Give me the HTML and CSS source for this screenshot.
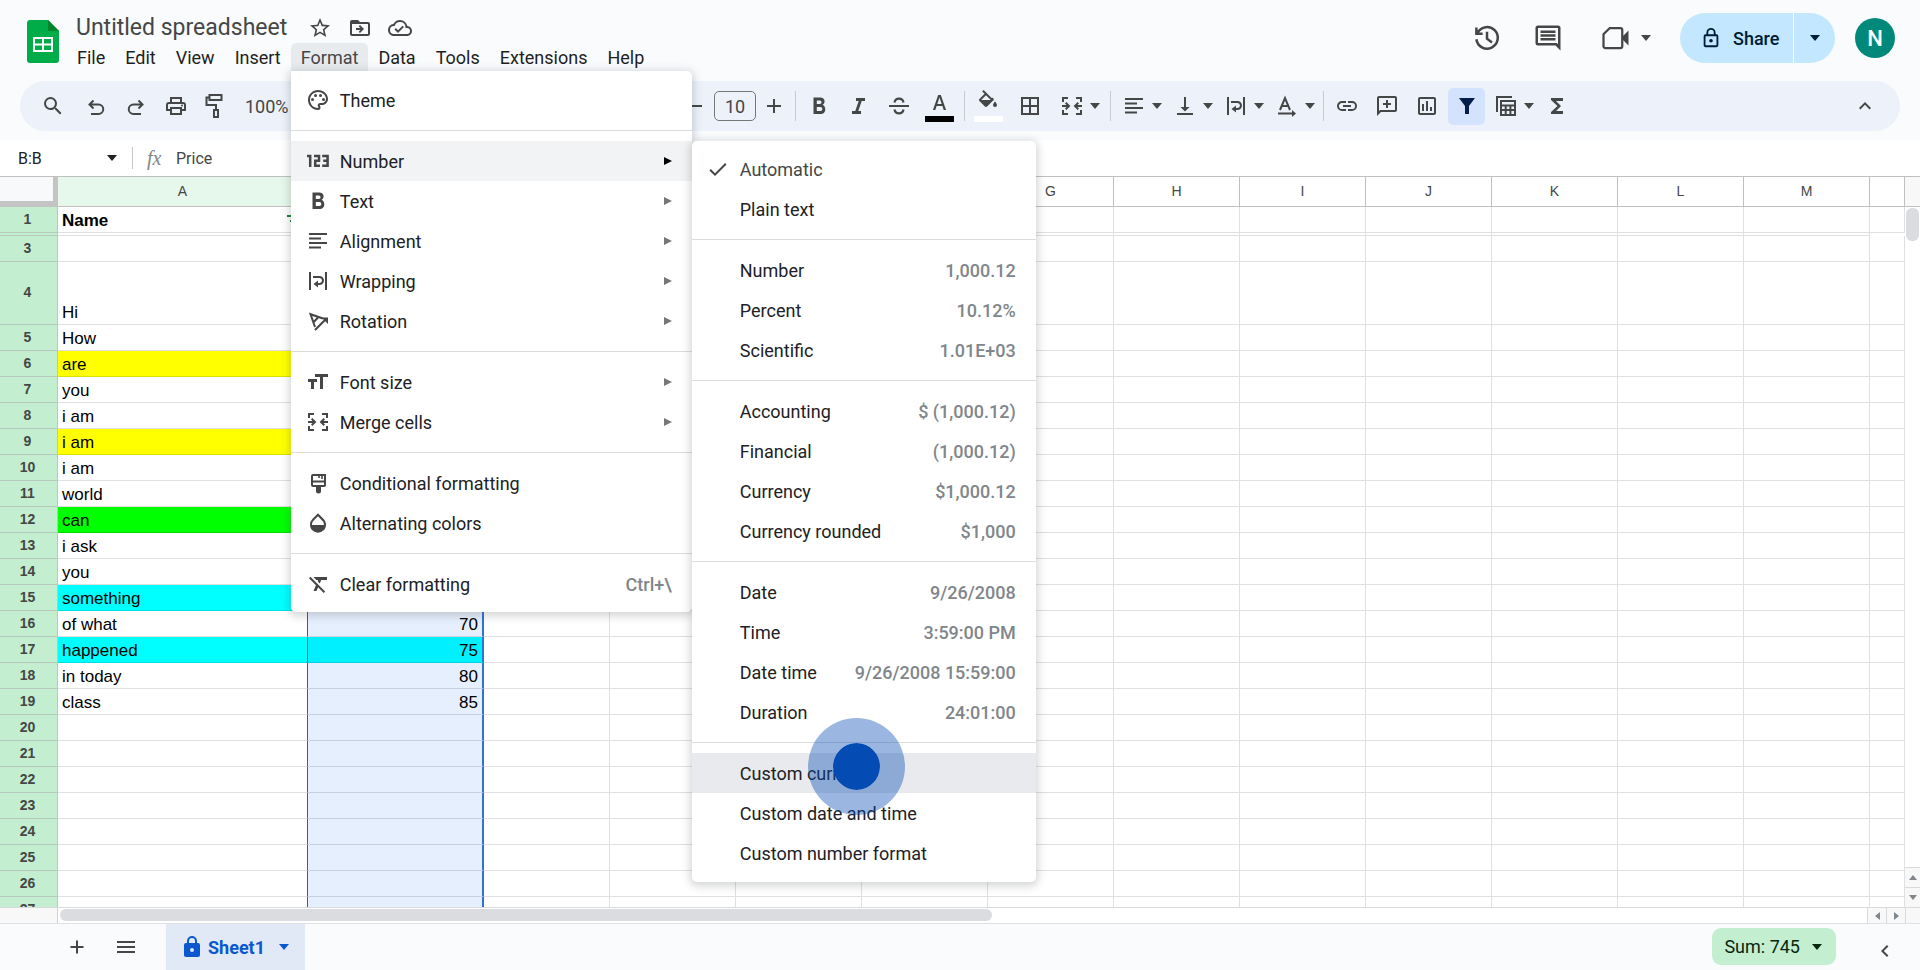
FILE: index.html
```html
<!DOCTYPE html>
<html lang="en">
<head>
<meta charset="utf-8">
<title>Untitled spreadsheet</title>
<link rel="stylesheet" href="styles.css">
</head>
<body>
<svg class="sprite" aria-hidden="true">
  <symbol id="i-down" viewBox="0 0 10 6"><path d="M0 0h10L5 6z"/></symbol>
  <symbol id="i-right" viewBox="0 0 8 8"><path d="M0 0v8l8-4z"/></symbol>
  <symbol id="i-align" viewBox="0 0 24 24"><path d="M3 3h18v2H3zM3 7.500h12v2H3zM3 12h18v2H3zM3 16.500h12v2H3z" transform="translate(0 1)"/></symbol>
  <symbol id="i-merge" viewBox="0 0 24 24"><path d="M2 3h6v2H4v3H2zM16 3h6v5h-2V5h-4zM2 16h2v3h4v2H2zM20 16h2v5h-6v-2h4zM2 11h4.500L5 9.400 6.400 8l4 4-4 4L5 14.600 6.500 13H2zM22 11h-4.500L19 9.400 17.600 8l-4 4 4 4 1.400-1.400L17.500 13H22z"/></symbol>
  <symbol id="i-wrap" viewBox="0 0 24 24"><path d="M3 3h2v18H3zM19 3h2v18h-2zM7 7h6.500a4.500 4.500 0 0 1 0 9H12v2.500L7.500 15l4.500-3.500V14h1.500a2.500 2.500 0 0 0 0-5H7z"/></symbol>
  <symbol id="i-bold" viewBox="0 0 24 24"><path d="M15.600 10.800A3.900 3.900 0 0 0 17.600 7.500C17.600 5 15.700 3.500 13.200 3.500H6.500v16.500h7.300c2.700 0 4.500-1.900 4.500-4.600 0-2-1-3.800-2.700-4.600zM9.800 6.400h3a1.700 1.700 0 0 1 0 3.500h-3zm3.500 10.700H9.800v-4.200h3.500a2.100 2.100 0 0 1 0 4.200z"/></symbol>
  <symbol id="i-lock" viewBox="0 0 24 24"><path d="M18 8h-1V6A5 5 0 0 0 7 6v2H6a2 2 0 0 0-2 2v10c0 1.100.9 2 2 2h12a2 2 0 0 0 2-2V10a2 2 0 0 0-2-2zM9 6a3 3 0 0 1 6 0v2H9zm3 11a2 2 0 1 1 0-4 2 2 0 0 1 0 4z"/></symbol>
</svg>

<header class="header">
  <svg class="logo" viewBox="0 0 32 43"><path fill="#00ac47" d="M3 0h18l11 11v29a3 3 0 0 1-3 3H3a3 3 0 0 1-3-3V3a3 3 0 0 1 3-3z"/><path fill="#00832d" d="M21 0l11 11H21z"/><path fill="#fff" d="M6 17h20v15H6zm2 2v4.500h7V19zm9 0v4.500h7V19zm-9 6.500V30h7v-4.500zm9 0V30h7v-4.500z" fill-rule="evenodd"/></svg>
  <div class="doc">
    <div class="title-row">
      <h1 class="title">Untitled spreadsheet</h1>
      <button class="plain" aria-label="Star"><svg class="icon" viewBox="0 0 24 24"><path d="M22 9.240l-7.190-.62L12 2 9.190 8.630 2 9.240l5.460 4.730L5.820 21 12 17.270 18.180 21l-1.630-7.030zM12 15.400l-3.760 2.270 1-4.280-3.320-2.880 4.380-.38L12 6.100l1.710 4.040 4.380.38-3.320 2.880 1 4.280z"/></svg></button>
      <button class="plain" aria-label="Move"><svg class="icon" viewBox="0 0 24 24"><path d="M20 6h-8l-2-2H4c-1.100 0-2 .9-2 2v12c0 1.100.9 2 2 2h16c1.100 0 2-.9 2-2V8c0-1.100-.9-2-2-2zm0 12H4V8h16zM12 17l4-4-4-4-1.300 1.300 1.700 1.700H8v2h4.400l-1.700 1.700z"/></svg></button>
      <button class="plain" aria-label="Saved"><svg class="icon" viewBox="0 0 24 24"><path d="M19.350 10.040A7.490 7.490 0 0 0 12 4C9.110 4 6.600 5.640 5.350 8.040A5.990 5.990 0 0 0 0 14c0 3.310 2.690 6 6 6h13c2.760 0 5-2.240 5-5 0-2.640-2.050-4.780-4.650-4.960zM19 18H6a4 4 0 0 1 0-8h.7a5.500 5.500 0 0 1 10.800 1.500v.5H19a3 3 0 0 1 0 6zm-9-3.800l-2.100-2.100-1.400 1.400L10 17l5.900-5.900-1.400-1.400z"/></svg></button>
    </div>
    <nav class="menubar">
      <button class="menu-btn">File</button>
      <button class="menu-btn">Edit</button>
      <button class="menu-btn">View</button>
      <button class="menu-btn">Insert</button>
      <div class="menu-open">
        <button class="menu-btn active">Format</button>
        <div class="menu format-menu" role="menu">
          <button class="item"><svg class="icon" viewBox="0 0 24 24"><path d="M12 22C6.490 22 2 17.510 2 12S6.490 2 12 2s10 4.040 10 9c0 3.310-2.690 6-6 6h-1.770c-.28 0-.5.22-.5.5 0 .12.050.23.130.33.410.47.640 1.060.640 1.670A2.500 2.500 0 0 1 12 22zm0-18c-4.410 0-8 3.590-8 8s3.590 8 8 8c.28 0 .5-.22.5-.5a.54.54 0 0 0-.14-.35c-.41-.46-.63-1.050-.63-1.650a2.500 2.500 0 0 1 2.500-2.500H16c2.210 0 4-1.790 4-4 0-3.860-3.590-7-8-7z"/><circle cx="6.500" cy="11.500" r="1.500"/><circle cx="9.500" cy="7.500" r="1.500"/><circle cx="14.500" cy="7.500" r="1.500"/><circle cx="17.500" cy="11.500" r="1.500"/></svg><span class="label">Theme</span></button>
          <hr>
          <div class="submenu-host">
            <button class="item hover"><svg class="icon" viewBox="0 0 24 24"><path fill="none" stroke="currentColor" stroke-width="2.500" d="M1 7h3.200v11M8 7h5v4.700H9.200v5.100H14M16.200 7h5.400v9.800h-5.400M17.200 11.800h4.400"/></svg><span class="label">Number</span><svg class="arrow" aria-hidden="true"><use href="#i-right"/></svg></button>
            <div class="menu number-menu" role="menu">
              <button class="item muted"><svg class="icon" viewBox="0 0 24 24"><path d="M9 16.200L4.800 12l-1.400 1.400L9 19 20.500 7.500 19.100 6.100z"/></svg><span class="label">Automatic</span></button>
              <button class="item"><span class="icon"></span><span class="label">Plain text</span></button>
              <hr>
              <button class="item"><span class="icon"></span><span class="label">Number</span><span class="hint">1,000.12</span></button>
              <button class="item"><span class="icon"></span><span class="label">Percent</span><span class="hint">10.12%</span></button>
              <button class="item"><span class="icon"></span><span class="label">Scientific</span><span class="hint">1.01E+03</span></button>
              <hr>
              <button class="item"><span class="icon"></span><span class="label">Accounting</span><span class="hint">$ (1,000.12)</span></button>
              <button class="item"><span class="icon"></span><span class="label">Financial</span><span class="hint">(1,000.12)</span></button>
              <button class="item"><span class="icon"></span><span class="label">Currency</span><span class="hint">$1,000.12</span></button>
              <button class="item"><span class="icon"></span><span class="label">Currency rounded</span><span class="hint">$1,000</span></button>
              <hr>
              <button class="item"><span class="icon"></span><span class="label">Date</span><span class="hint">9/26/2008</span></button>
              <button class="item"><span class="icon"></span><span class="label">Time</span><span class="hint">3:59:00 PM</span></button>
              <button class="item"><span class="icon"></span><span class="label">Date time</span><span class="hint">9/26/2008 15:59:00</span></button>
              <button class="item"><span class="icon"></span><span class="label">Duration</span><span class="hint">24:01:00</span></button>
              <hr>
              <div class="pointer-host">
                <button class="item pressed"><span class="icon"></span><span class="label">Custom currency</span></button>
                <span class="pointer"></span>
              </div>
              <button class="item"><span class="icon"></span><span class="label">Custom date and time</span></button>
              <button class="item"><span class="icon"></span><span class="label">Custom number format</span></button>
            </div>
          </div>
          <button class="item"><svg class="icon"><use href="#i-bold"/></svg><span class="label">Text</span><svg class="arrow"><use href="#i-right"/></svg></button>
          <button class="item"><svg class="icon"><use href="#i-align"/></svg><span class="label">Alignment</span><svg class="arrow"><use href="#i-right"/></svg></button>
          <button class="item"><svg class="icon"><use href="#i-wrap"/></svg><span class="label">Wrapping</span><svg class="arrow"><use href="#i-right"/></svg></button>
          <button class="item"><svg class="icon" viewBox="0 0 24 24"><path fill="none" stroke="currentColor" stroke-width="2" d="M9 18L4.500 5.200 17 9.500M7.500 13.200L12.500 8M9 21L20 10"/><path d="M15.500 8.500H22V15z"/></svg><span class="label">Rotation</span><svg class="arrow"><use href="#i-right"/></svg></button>
          <hr>
          <button class="item"><svg class="icon" viewBox="0 0 24 24"><path d="M9 4v3h5v12h3V7h5V4zM2 12h3v7h3v-7h3V9H2z"/></svg><span class="label">Font size</span><svg class="arrow"><use href="#i-right"/></svg></button>
          <button class="item"><svg class="icon"><use href="#i-merge"/></svg><span class="label">Merge cells</span><svg class="arrow"><use href="#i-right"/></svg></button>
          <hr>
          <button class="item"><svg class="icon" viewBox="0 0 24 24"><path d="M7 3h13v11a2 2 0 0 1-2 2h-3v4a2.500 2.500 0 0 1-5 0v-4H7a2 2 0 0 1-2-2V5a2 2 0 0 1 2-2zm0 2v4.500h11V5h-1.200v3h-1.600V5h-1.400v2h-1.600V5zm0 6.500V14h11v-2.500z" fill-rule="evenodd"/></svg><span class="label">Conditional formatting</span></button>
          <button class="item"><svg class="icon" viewBox="0 0 24 24"><path d="M17.660 8L12 2.350 6.340 8A8.020 8.020 0 0 0 4 13.640c0 2 .78 4.110 2.340 5.670a7.990 7.990 0 0 0 11.320 0c1.560-1.560 2.340-3.670 2.340-5.670S19.220 9.560 17.660 8zM6 14c.01-2 .62-3.270 1.760-4.400L12 5.270l4.240 4.380C17.380 10.770 17.990 12 18 14z"/></svg><span class="label">Alternating colors</span></button>
          <hr>
          <button class="item"><svg class="icon" viewBox="0 0 24 24"><path d="M20 8V5H6.390l3 3h1.830l-.55 1.280 2.090 2.100L14.210 8zM3.410 4.860L2 6.270l6.970 6.970L6.500 19h3l1.570-3.660L16.730 21l1.410-1.410z" transform="translate(1 0)"/></svg><span class="label">Clear formatting</span><span class="hint">Ctrl+\</span></button>
        </div>
      </div>
      <button class="menu-btn">Data</button>
      <button class="menu-btn">Tools</button>
      <button class="menu-btn">Extensions</button>
      <button class="menu-btn">Help</button>
    </nav>
  </div>
  <div class="actions">
    <button class="plain" aria-label="Version history"><svg class="icon-lg" viewBox="0 0 24 24"><path fill="none" stroke="currentColor" stroke-width="2" d="M4.500 7.700A8.600 8.600 0 1 1 3.500 13M3.500 3.500v5h5M12 7v5.500l4 3"/></svg></button>
    <button class="plain comments" aria-label="Comments"><svg class="icon-lg" viewBox="0 0 24 24"><path d="M22 22l-4-4H4a2 2 0 0 1-2-2V4a2 2 0 0 1 2-2h16a2 2 0 0 1 2 2zM20 4H4v12h15l1 1zM6 6h12v2H6zM6 9h12v2H6zM6 12h12v2H6z"/></svg></button>
    <button class="plain meet" aria-label="Meet"><svg class="icon-lg" viewBox="0 0 24 24"><path fill="none" stroke="currentColor" stroke-width="1.800" d="M7 4h8.500A1.500 1.500 0 0 1 17 5.500v13a1.500 1.500 0 0 1-1.500 1.500h-12A1.500 1.500 0 0 1 2 18.500V9z"/><path d="M17 11l5-5v12l-5-5z"/></svg><svg class="caret"><use href="#i-down"/></svg></button>
    <div class="share">
      <button class="share-main"><svg class="icon" viewBox="0 0 24 24"><path d="M18 8h-1V6A5 5 0 0 0 7 6v2H6a2 2 0 0 0-2 2v10c0 1.100.9 2 2 2h12a2 2 0 0 0 2-2V10a2 2 0 0 0-2-2zM9 6a3 3 0 0 1 6 0v2H9zm9 14H6V10h12zm-6-3a2 2 0 1 0 0-4 2 2 0 0 0 0 4z"/></svg>Share</button>
      <button class="share-more" aria-label="Share options"><svg class="caret"><use href="#i-down"/></svg></button>
    </div>
    <button class="avatar">N</button>
  </div>
</header>

<div class="toolbar" role="toolbar">
  <div class="tools-start">
    <button class="tool search" aria-label="Search"><svg class="icon" viewBox="0 0 24 24"><path d="M15.500 14h-.79l-.28-.27A6.470 6.470 0 0 0 16 9.500 6.500 6.500 0 1 0 9.500 16c1.610 0 3.090-.59 4.230-1.570l.27.28v.79l5 4.990L20.490 19zm-6 0a4.500 4.500 0 1 1 0-9 4.500 4.500 0 0 1 0 9z"/></svg></button>
    <button class="tool" aria-label="Undo"><svg class="icon" viewBox="0 0 24 24"><path fill="none" stroke="currentColor" stroke-width="2" d="M7 20h7.500a4.700 4.700 0 0 0 0-9.500H6M9.500 6.500l-4 4 4 4"/></svg></button>
    <button class="tool" aria-label="Redo"><svg class="icon" viewBox="0 0 24 24"><path fill="none" stroke="currentColor" stroke-width="2" d="M17 20H9.500a4.700 4.700 0 0 1 0-9.500H18M14.500 6.500l4 4-4 4"/></svg></button>
    <button class="tool" aria-label="Print"><svg class="icon" viewBox="0 0 24 24"><path d="M19 8h-1V3H6v5H5a3 3 0 0 0-3 3v6h4v4h12v-4h4v-6a3 3 0 0 0-3-3zM8 5h8v3H8zm8 14H8v-4h8zm2-4v-2H6v2H4v-4c0-.55.45-1 1-1h14c.55 0 1 .45 1 1v4z"/><circle cx="18" cy="11.500" r="1"/></svg></button>
    <button class="tool" aria-label="Paint format"><svg class="icon" viewBox="0 0 24 24"><path fill="none" stroke="currentColor" stroke-width="2" d="M5.500 1h12v5h-12zM5.500 3.500H2.500V11H12v5M10 16h4v7h-4z"/></svg></button>
    <button class="zoom">100%</button>
  </div>
  <div class="tool-group">
    <button class="tool small" aria-label="Decrease font size"><svg class="icon" viewBox="0 0 24 24"><path d="M5 11h14v2H5z"/></svg></button>
    <input class="font-size" aria-label="Font size" value="10">
    <button class="tool small" aria-label="Increase font size"><svg class="icon" viewBox="0 0 24 24"><path d="M5 11h6V5h2v6h6v2h-6v6h-2v-6H5z"/></svg></button>
  </div>
  <div class="tool-group">
    <button class="tool" aria-label="Bold"><svg class="icon"><use href="#i-bold"/></svg></button>
    <button class="tool" aria-label="Italic"><svg class="icon" viewBox="0 0 24 24"><path d="M9 4v3h2.700L8.300 17H5v3h9v-3h-2.700l3.400-10H18V4z"/></svg></button>
    <button class="tool" aria-label="Strikethrough"><svg class="icon" viewBox="0 0 24 24"><path d="M2 11h20v2H2z"/><path fill="none" stroke="currentColor" stroke-width="2.200" d="M16.500 8.500C16 5.500 14 4.700 12 4.700S8 5.500 7.500 8.500M7.500 15.500c.5 3 2.500 3.800 4.500 3.800s4-.8 4.500-3.800"/></svg></button>
    <button class="tool" aria-label="Text color"><svg class="icon-bar" viewBox="0 0 29 28"><path d="M13.200 1h2.600l5.300 15h-2.400l-1.300-4h-5.800l-1.300 4H7.900zM12.300 10h4.400l-2.200-6.500z"/><path fill="#000" d="M0 22h29v6H0z"/></svg></button>
  </div>
  <div class="tool-group spaced">
    <button class="tool" aria-label="Fill color"><svg class="icon-bar fill" viewBox="0 0 29 34"><path d="M16.600 8.900L8.600 1 7.200 2.400l2.400 2.400-5.200 5.100a1.500 1.500 0 0 0 0 2.200l5.500 5.500c.6.600 1.600.6 2.200 0l5.500-5.500a1.500 1.500 0 0 0-1.100-3.200zM6.200 11L11 6.200l4.800 4.800zM20 12.500s-2 2.200-2 3.500a2 2 0 0 0 4 0c0-1.300-2-3.500-2-3.500z" transform="translate(1 1)"/><path fill="#fff" d="M0 28h29v6H0z"/></svg></button>
    <button class="tool" aria-label="Borders"><svg class="icon" viewBox="0 0 24 24"><path d="M3 3v18h18V3zm8 16H5v-6h6zm0-8H5V5h6zm8 8h-6v-6h6zm0-8h-6V5h6z"/></svg></button>
    <button class="tool-menu" aria-label="Merge"><svg class="icon"><use href="#i-merge"/></svg><svg class="caret"><use href="#i-down"/></svg></button>
  </div>
  <div class="tool-group">
    <button class="tool-menu" aria-label="Align"><svg class="icon"><use href="#i-align"/></svg><svg class="caret"><use href="#i-down"/></svg></button>
    <button class="tool-menu" aria-label="Vertical align"><svg class="icon" viewBox="0 0 24 24"><path d="M11 3h2v10h3.500L12 17.500 7.500 13H11zM4 19h16v2H4z"/></svg><svg class="caret"><use href="#i-down"/></svg></button>
    <button class="tool-menu" aria-label="Wrap"><svg class="icon"><use href="#i-wrap"/></svg><svg class="caret"><use href="#i-down"/></svg></button>
    <button class="tool-menu" aria-label="Rotate"><svg class="icon" viewBox="0 0 24 24"><path fill="none" stroke="currentColor" stroke-width="2" d="M5 16L10 4l5 12M7 12h6M3 19.500h15"/><path d="M17 16l4 3.500-4 3.500z"/></svg><svg class="caret"><use href="#i-down"/></svg></button>
  </div>
  <div class="tool-group">
    <button class="tool" aria-label="Link"><svg class="icon" viewBox="0 0 24 24"><path d="M3.900 12c0-1.710 1.390-3.100 3.100-3.100h4V7H7a5 5 0 0 0 0 10h4v-1.900H7A3.100 3.100 0 0 1 3.900 12zM8 13h8v-2H8zm9-6h-4v1.900h4a3.100 3.100 0 0 1 0 6.200h-4V17h4a5 5 0 0 0 0-10z"/></svg></button>
    <button class="tool" aria-label="Add comment"><svg class="icon" viewBox="0 0 24 24"><path d="M2 22V4c0-1.100.9-2 2-2h16a2 2 0 0 1 2 2v12a2 2 0 0 1-2 2H6zM4 4v13l1-1h15V4zM11 6h2v3h3v2h-3v3h-2v-3H8V9h3z"/></svg></button>
    <button class="tool" aria-label="Chart"><svg class="icon" viewBox="0 0 24 24"><path d="M19 3H5a2 2 0 0 0-2 2v14c0 1.100.9 2 2 2h14a2 2 0 0 0 2-2V5a2 2 0 0 0-2-2zm0 16H5V5h14zM7 10h2v7H7zM11 7h2v10h-2zM15 13h2v4h-2z"/></svg></button>
    <button class="tool on" aria-label="Filter"><svg class="icon" viewBox="0 0 24 24"><path d="M4 4h16l-6 8v8h-4v-8z"/></svg></button>
    <button class="tool-menu" aria-label="Table views"><svg class="icon" viewBox="0 0 24 24"><path fill="none" stroke="currentColor" stroke-width="2" d="M3 18V3h15M7 7h14v14H7zM7 11.500h14M7 16h14M11.700 11.500V21M16.400 11.500V21"/></svg><svg class="caret"><use href="#i-down"/></svg></button>
    <button class="tool" aria-label="Functions"><svg class="icon" viewBox="0 0 24 24"><path d="M18 4H6v2l6.500 6L6 18v2h12v-3h-7l5-5-5-5h7z"/></svg></button>
  </div>
  <button class="tool collapse" aria-label="Hide menus"><svg class="icon" viewBox="0 0 24 24"><path d="M12 8l-6 6 1.400 1.400 4.600-4.600 4.600 4.600L18 14z"/></svg></button>
</div>

<div class="formula">
  <button class="name-box"><span>B:B</span><svg class="caret"><use href="#i-down"/></svg></button>
  <span class="fx">fx</span>
  <input class="formula-input" aria-label="Formula" value="Price">
</div>

<main class="sheet">
  <div class="grid">
    <table class="cells">
      <colgroup><col class="c-head"><col class="c-a"><col class="c-b"><col class="c-n"><col class="c-n"><col class="c-n"><col class="c-n"><col class="c-n"><col class="c-n"><col class="c-n"><col class="c-n"><col class="c-n"><col class="c-n"><col class="c-n"><col></colgroup>
      <thead><tr><td class="corner"><th class="sel">A<th class="sel">B<th>C<th>D<th>E<th>F<th>G<th>H<th>I<th>J<th>K<th>L<th>M<th></tr></thead>
      <tbody>
        <tr><th>1<td><div class="filter-cell"><b>Name</b><svg class="filter" viewBox="0 0 16 12"><path d="M0 0h16v2H0zM3 5h10v2H3zM6 10h4v2H6z"/></svg></div><td><td><td><td><td><td><td><td><td><td><td><td><td></tr>
        <tr class="frozen"><th><td><td><td><td><td><td><td><td><td><td><td><td><td></tr>
        <tr><th>3<td><td><td><td><td><td><td><td><td><td><td><td><td><td></tr>
        <tr class="tall"><th>4<td>Hi<td><td><td><td><td><td><td><td><td><td><td><td><td></tr>
        <tr><th>5<td>How<td><td><td><td><td><td><td><td><td><td><td><td><td></tr>
        <tr><th>6<td class="yellow">are<td><td><td><td><td><td><td><td><td><td><td><td><td></tr>
        <tr><th>7<td>you<td><td><td><td><td><td><td><td><td><td><td><td><td></tr>
        <tr><th>8<td>i am<td><td><td><td><td><td><td><td><td><td><td><td><td></tr>
        <tr><th>9<td class="yellow">i am<td><td><td><td><td><td><td><td><td><td><td><td><td></tr>
        <tr><th>10<td>i am<td><td><td><td><td><td><td><td><td><td><td><td><td></tr>
        <tr><th>11<td>world<td><td><td><td><td><td><td><td><td><td><td><td><td></tr>
        <tr><th>12<td class="green">can<td><td><td><td><td><td><td><td><td><td><td><td><td></tr>
        <tr><th>13<td>i ask<td><td><td><td><td><td><td><td><td><td><td><td><td></tr>
        <tr><th>14<td>you<td><td><td><td><td><td><td><td><td><td><td><td><td></tr>
        <tr><th>15<td class="cyan">something<td><td><td><td><td><td><td><td><td><td><td><td><td></tr>
        <tr><th>16<td>of what<td>70<td><td><td><td><td><td><td><td><td><td><td><td></tr>
        <tr><th>17<td class="cyan">happened<td class="cyan">75<td><td><td><td><td><td><td><td><td><td><td><td></tr>
        <tr><th>18<td>in today<td>80<td><td><td><td><td><td><td><td><td><td><td><td></tr>
        <tr><th>19<td>class<td>85<td><td><td><td><td><td><td><td><td><td><td><td></tr>
        <tr><th>20<td><td><td><td><td><td><td><td><td><td><td><td><td><td></tr>
        <tr><th>21<td><td><td><td><td><td><td><td><td><td><td><td><td><td></tr>
        <tr><th>22<td><td><td><td><td><td><td><td><td><td><td><td><td><td></tr>
        <tr><th>23<td><td><td><td><td><td><td><td><td><td><td><td><td><td></tr>
        <tr><th>24<td><td><td><td><td><td><td><td><td><td><td><td><td><td></tr>
        <tr><th>25<td><td><td><td><td><td><td><td><td><td><td><td><td><td></tr>
        <tr><th>26<td><td><td><td><td><td><td><td><td><td><td><td><td><td></tr>
        <tr><th>27<td><td><td><td><td><td><td><td><td><td><td><td><td><td></tr>
      </tbody>
    </table>
  </div>
  <div class="vscroll">
    <div class="vtrack"><div class="vthumb"></div></div>
    <button class="step" aria-label="Scroll up"><svg viewBox="0 0 8 5"><path d="M0 5h8L4 0z"/></svg></button>
    <button class="step" aria-label="Scroll down"><svg viewBox="0 0 8 5"><path d="M0 0h8L4 5z"/></svg></button>
  </div>
</main>
<div class="hscroll">
  <div class="hpad"></div>
  <div class="htrack"><div class="hthumb"></div></div>
  <button class="hstep" aria-label="Scroll left"><svg viewBox="0 0 5 8"><path d="M5 0v8L0 4z"/></svg></button>
  <button class="hstep" aria-label="Scroll right"><svg viewBox="0 0 5 8"><path d="M0 0v8l5-4z"/></svg></button>
  <div class="hcorner"></div>
</div>

<footer class="footer">
  <button class="foot-btn" aria-label="Add sheet"><svg class="icon" viewBox="0 0 24 24"><path d="M5.500 11H11V5.500h2V11h5.500v2H13v5.500h-2V13H5.500z"/></svg></button>
  <button class="foot-btn" aria-label="All sheets"><svg class="icon" viewBox="0 0 24 24"><path d="M3 6h18v2H3zM3 11h18v2H3zM3 16h18v2H3z"/></svg></button>
  <button class="tab"><svg class="icon"><use href="#i-lock"/></svg><span>Sheet1</span><svg class="caret"><use href="#i-down"/></svg></button>
  <button class="sum"><span>Sum: 745</span><svg class="caret"><use href="#i-down"/></svg></button>
  <button class="side" aria-label="Show side panel"><svg class="icon" viewBox="0 0 24 24"><path d="M15.400 7.400L14 6l-6 6 6 6 1.400-1.400-4.600-4.600z"/></svg></button>
</footer>
</body>
</html>
```
FILE: styles.css
```css
* { box-sizing: border-box; }
html, body { height: 100%; }
body {
  margin: 0;
  display: flex;
  flex-direction: column;
  overflow: hidden;
  background: #f9fbfd;
  color: #202124;
  font-family: Roboto, "Liberation Sans", sans-serif;
  font-size: 18px;
}
button, input { font: inherit; color: inherit; border: 0; padding: 0; margin: 0; background: none; }
button { cursor: pointer; white-space: nowrap; }
svg { display: block; fill: currentColor; flex: none; }
.sprite { position: absolute; width: 0; height: 0; }
.icon { width: 24px; height: 24px; flex: none; }
.icon-lg { width: 30px; height: 30px; }
.caret { width: 10px; height: 6px; }
.plain { display: flex; align-items: center; color: #444746; }

/* Header */
.header { display: flex; height: 81px; flex: none; padding: 0 20px 0 27px; }
.logo { width: 32px; height: 43px; margin-top: 20px; }
.doc { margin-left: 8px; padding-top: 12px; }
.title-row { display: flex; align-items: center; height: 31px; padding-left: 9px; gap: 16px; }
.title { margin: 0 5px 0 0; font-size: 23px; font-weight: 400; color: #444746; }
.menubar { display: flex; }
.menu-btn { height: 28px; padding: 0 10px; border-radius: 5px 5px 0 0; color: #1f1f1f; }
.menu-btn.active { background: #e8ebee; color: #444746; }
.menu-open, .submenu-host, .pointer-host { position: relative; }
.actions { display: flex; align-items: center; height: 50px; margin: 13px 0 0 auto; }
.actions > .plain { margin-right: 31px; }
.actions > .comments { margin-right: 38px; }
.actions > .meet { gap: 10px; margin-right: 29px; }
.share { display: flex; height: 50px; border-radius: 25px; overflow: hidden; background: #c2e7ff; color: #001d35; font-weight: 500; }
.share-main { display: flex; align-items: center; gap: 11px; width: 114px; padding-left: 20px; border-right: 1px solid #fff; }
.share-main .icon { width: 22px; height: 22px; }
.share-more { display: flex; align-items: center; justify-content: center; width: 41px; }
.avatar { width: 40px; height: 40px; margin: 0 5px 0 20px; border-radius: 50%; background: #00897b; color: #fff; font-size: 22px; font-weight: 500; }

/* Menus */
.menu { position: absolute; z-index: 5; padding: 9px 0 8px; border-radius: 5px; background: #fff; box-shadow: 0 2px 8px 2px rgba(60, 64, 67, .22); }
.format-menu { left: 0; top: 100%; width: 401px; border-top-left-radius: 0; }
.number-menu { left: 100%; top: 0; width: 344px; padding: 8px 0 9px; }
.menu hr { height: 1px; margin: 10px 0; border: 0; background: #dadce0; }
.item { display: flex; align-items: center; width: 100%; height: 40px; padding: 0 20px 0 15px; gap: 10px; text-align: left; color: #202124; }
.item .icon { color: #444746; }
.item .label { flex: 1; }
.item .arrow { width: 8px; height: 8px; color: #777; }
.item.hover { background: #f1f3f4; }
.item.hover .arrow { color: #000; }
.item.muted { color: #444746; }
.item.pressed { background: #e8eaed; }
.hint { color: #80868b; font-weight: 500; }
.number-menu .item { gap: 10px; padding-left: 14px; }
.pointer { position: absolute; left: 116px; top: -35px; width: 97px; height: 97px; border: 25px solid rgba(4, 76, 180, .4); border-radius: 50%; background: #044cb4; background-clip: padding-box; }

/* Toolbar */
.toolbar { display: flex; align-items: center; flex: none; height: 50px; margin: 0 20px; padding: 0 15px 0 13px; border-radius: 25px; background: #edf2fa; color: #444746; }
.tools-start { display: flex; align-items: center; width: 647px; flex: none; }
.tool, .tool-menu { display: flex; align-items: center; justify-content: center; width: 40px; height: 37px; }
.tool.small { width: 30px; }
.search { margin-right: 3px; }
.zoom { padding: 0 9px; }
.tool-menu { width: 51px; gap: 6px; padding-left: 5px; }
.tool-group { display: flex; align-items: center; padding: 0 5px 0 4px; background: linear-gradient(#c7cbd1, #c7cbd1) left center / 1px 30px no-repeat; }
.tool-group.spaced { gap: 2px; padding-right: 7px; }
.tools-start + .tool-group { background: none; padding: 0 6px 0 0; }
.font-size { width: 42px; height: 30px; margin: 0 3px 0 4px; border: 1px solid #747775; border-radius: 5px; text-align: center; }
.icon-bar { width: 29px; height: 28px; margin-top: 4px; }
.icon-bar.fill { height: 34px; margin-top: -2px; }
.tool.on { width: 37px; margin: 0 1px; border-radius: 5px; background: #d3e3fd; color: #041e49; }
.collapse { margin-left: auto; }

/* Formula bar */
.formula { display: flex; align-items: center; flex: none; height: 37px; margin-top: 9px; background: #fff; border-bottom: 1px solid #c0c0c0; font-size: 16px; }
.name-box { display: flex; align-items: center; justify-content: space-between; width: 133px; height: 22px; padding: 0 15px 0 18px; border-right: 1px solid #c7c7c7; color: #202124; }
.fx { width: 43px; padding-left: 14px; font: italic 20px "Liberation Serif", serif; color: #80868b; }
.formula-input { flex: 1; min-width: 0; height: 30px; color: #444746; }

/* Cells */
.sheet { display: flex; flex: 1; min-height: 0; overflow: hidden; background: #fff; border-bottom: 1px solid #d9dadc; }
.grid { flex: 1; min-width: 0; overflow: hidden; }
.cells { width: 100%; table-layout: fixed; border-collapse: separate; border-spacing: 0; font-family: "Liberation Sans", Arial, sans-serif; }
.c-head { width: 58px; }
.c-a { width: 250px; }
.c-b { width: 176px; }
.c-n { width: 126px; }
.cells th, .cells td { height: 26px; padding: 0 4px; border-right: 1px solid #e0e0e0; border-bottom: 1px solid #e0e0e0; overflow: hidden; white-space: nowrap; }
.cells thead th { height: 30px; padding-bottom: 1px; border-color: #c0c0c0; font-size: 14px; font-weight: 400; color: #444746; }
.cells thead th.sel { background: #e6f8ec; }
.cells .corner { border-right: 5px solid #c4c4c4; border-bottom: 6px solid #c4c4c4; background: #f8f9fb; }
.cells tbody th { padding: 0 2px 2px 0; border-color: #b7c9bc; background: #c4eed0; font-size: 14px; line-height: 16px; color: #444746; }
.cells tbody td { vertical-align: bottom; font-size: 17px; line-height: 20px; padding-bottom: 1px; color: #000; }
.cells tbody td:nth-child(2) { border-right-color: #188038; }
.cells tbody td:nth-child(3) { border-right: 2px solid #3271d6; border-bottom-color: #c9d0de; background: #e6effd; text-align: right; }
.cells .frozen th, .cells .frozen td { height: 3px; padding: 0; line-height: 0; }
.cells .tall td { height: 63px; }
.cells tbody td.yellow { background: #ff0; border-bottom-color: #dede00; }
.cells tbody td.green { background: #0f0; border-bottom-color: #00de00; }
.cells tbody td.cyan { background: #0ff; border-bottom-color: #00dede; }
.cells tbody td.cyan:nth-child(3) { background: #00f0ff; border-bottom-color: #00d5e0; }
.filter-cell { display: flex; align-items: center; justify-content: space-between; }
.filter { width: 16px; height: 12px; color: #188038; }

/* Scrollbars */
.vscroll { display: flex; flex-direction: column; width: 15px; background: #fff; }
.vtrack { flex: 1; padding: 31px 1px 0; background: linear-gradient(#f8f8f8 29px, #c0c0c0 29px, #c0c0c0 30px, #fff 30px); }
.vthumb { height: 33px; border-radius: 6px; background: #dadce0; }
.step { display: flex; align-items: center; justify-content: center; height: 20px; border-top: 1px solid #d9dadc; background: #f8f8f8; color: #80868b; }
.step svg { width: 8px; height: 5px; }
.hscroll { display: flex; flex: none; height: 15px; background: #fff; }
.hpad { width: 58px; background: #f8f8f8; border-right: 1px solid #d0d0d0; }
.htrack { flex: 1; padding: 1px 2px; }
.hthumb { width: calc(52% - 7px); height: 12px; border-radius: 6px; background: #dadce0; }
.hstep { display: flex; align-items: center; justify-content: center; width: 19px; border-left: 1px solid #d9dadc; background: #f8f8f8; color: #80868b; }
.hstep svg { width: 5px; height: 8px; }
.hcorner { width: 15px; border-left: 1px solid #d9dadc; background: #f8f8f8; }

/* Footer */
.footer { display: flex; flex: none; height: 47px; padding: 0 23px 0 52px; border-top: 1px solid #dfe1e5; background: #f9fbfd; color: #444746; }
.foot-btn { display: flex; align-items: center; justify-content: center; width: 49px; }
.tab { display: flex; align-items: center; width: 139px; margin-left: 16px; padding-left: 14px; background: #e1e9f7; color: #0b57d0; font-weight: 700; }
.tab span { margin: 0 14px 0 4px; }
.sum { display: flex; align-items: center; gap: 12px; height: 37px; margin: 4px 0 0 auto; padding: 0 14px 0 12px; border-radius: 9px; background: #c4eed0; color: #072711; }
.side { margin-left: 37px; padding-top: 7px; }
```
